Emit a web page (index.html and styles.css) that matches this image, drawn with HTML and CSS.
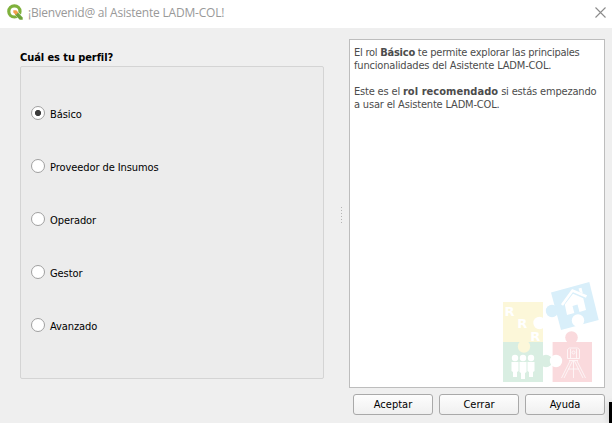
FILE: index.html
```html
<!DOCTYPE html>
<html lang="es">
<head>
<meta charset="utf-8">
<title>¡Bienvenid@ al Asistente LADM-COL!</title>
<link rel="stylesheet" href="styles.css">
</head>
<body>
<div class="dialog">
  <header class="titlebar">
    <svg class="logo" width="16" height="16" viewBox="0 0 16 16">
      <circle cx="7.400" cy="7.400" r="5.600" fill="none" stroke="#7fb13c" stroke-width="3.200"/>
      <path d="M9 9L14.500 14.500" stroke="#fff" stroke-width="4.500"/>
      <path d="M8 8h2.500l5.200 5.500v2.200h-3L8 10.700z" fill="#6ea23a"/>
      <path d="M6.300 6.300h3l2 2.200-2.400 2.400-2.600-2.400z" fill="#f0a04b"/>
    </svg>
    <span class="title">¡Bienvenid@ al Asistente LADM-COL!</span>
    <svg class="close" width="11" height="11" viewBox="0 0 11 11"><path d="M.5.5l10 10M10.500.5l-10 10" stroke="#8b8b8b" stroke-width="1.100"/></svg>
  </header>
  <main class="content">
    <section class="profile">
      <h1 class="heading">Cuál es tu perfil?</h1>
      <div class="group">
        <div class="option"><span class="radio checked"></span><span class="label">Básico</span></div>
        <div class="option"><span class="radio"></span><span class="label">Proveedor de Insumos</span></div>
        <div class="option"><span class="radio"></span><span class="label">Operador</span></div>
        <div class="option"><span class="radio"></span><span class="label">Gestor</span></div>
        <div class="option"><span class="radio"></span><span class="label">Avanzado</span></div>
      </div>
    </section>
    <div class="splitter"><i></i><i></i><i></i><i></i><i></i><i></i></div>
    <section class="side">
      <div class="info">
        <p><span class="tight">El rol <b>Básico</b> te permite explorar las principales</span><br>funcionalidades del Asistente LADM-COL.</p>
        <p>Este es el <b class="wide">rol recomendado</b> si estás empezando<br>a usar el Asistente LADM-COL.</p>
        <svg class="puzzle" width="98" height="102" viewBox="0 0 98 102">
          <rect x="1" y="21" width="40" height="40" fill="#fcf7d9"/>
          <rect x="1" y="61" width="40" height="40" fill="#d9eee2"/>
          <circle cx="22" cy="65.500" r="6.200" fill="#fcf7d9"/>
          <circle cx="37.500" cy="42" r="6.200" fill="#fff"/>
          <circle cx="44" cy="80" r="6.200" fill="#d9eee2"/>
          <rect x="50.600" y="61" width="39.400" height="40" fill="#fadadd"/>
          <circle cx="69.500" cy="56.500" r="6.300" fill="#fadadd"/>
          <circle cx="54" cy="80" r="6.200" fill="#fff"/>
          <path d="M49 11.500L87.300 1 96.700 39 59 49z" fill="#d9effa"/>
          <circle cx="50" cy="30" r="6.200" fill="#d9effa"/>
          <circle cx="76" cy="39.500" r="6.200" fill="#fff"/>
          <g class="rights"><text x="2.500" y="34.700">R</text><text x="15.300" y="47">R</text><text x="28.300" y="59.500">R</text></g>
          <path d="M60 24L70.500 9.500 84.500 15.500" fill="none" stroke="#fff" stroke-width="2.600"/>
          <path d="M76.500 7.500l3-.8 1.300 5.500-3-1z" fill="#fff"/>
          <path d="M62.800 23.500L71 12.800 81.300 17.200 84 29 77.500 31 75.500 23.500 70.500 25 72.300 32 65 34z" fill="#fff"/>
          <g fill="#fff">
            <circle cx="13" cy="77" r="3.200"/><circle cx="21" cy="77" r="3.200"/><circle cx="29" cy="77" r="3.200"/>
            <path d="M9.500 81h7v9l-1.500 1v5h-4v-5l-1.500-1zM25.500 81h7v9l-1.500 1v5h-4v-5l-1.500-1z"/>
            <path d="M17.500 81h7v10l-1.500 1v6h-4v-6l-1.500-1z"/>
          </g>
          <g fill="none" stroke="#fff" stroke-width=".9" opacity=".8">
            <path d="M65.500 68.500l2-1.500h8l2 1.500v9h-12zM68.500 68v9M74.500 68v9M67 79.500h9M71.500 80v17M68 80L59.500 97M70.500 80L62 97M75 80l8.500 17M72.500 80l8.500 17M66 88h11"/>
            <circle cx="71.500" cy="71.500" r="1.500"/>
          </g>
        </svg>
      </div>
      <div class="buttons">
        <button>Aceptar</button><button>Cerrar</button><button>Ayuda</button>
      </div>
    </section>
  </main>
  <div class="corner"></div>
</div>
</body>
</html>
```
FILE: styles.css
```css
* { box-sizing: border-box; }
body { margin: 0; }
.dialog {
  position: relative;
  display: flex;
  flex-direction: column;
  width: 612px;
  height: 423px;
  overflow: hidden;
  background: #efefef;
  color: #000;
  font: 11px/13px "DejaVu Sans Condensed", "DejaVu Sans", sans-serif;
  font-stretch: condensed;
}
.titlebar {
  display: flex;
  align-items: center;
  height: 28px;
  padding: 0 6px 4px 7px;
  background: #fff;
}
.title {
  flex: 1;
  margin: 2px 0 0 5px;
  color: #999;
  font: 12px/16px "Open Sans", sans-serif;
  letter-spacing: -.21px;
  white-space: nowrap;
}
.content { display: flex; flex: 1; }
.profile { width: 304px; margin-left: 20px; padding-top: 23px; }
.heading { margin: 0 0 2px; font-size: 11px; line-height: 13px; font-weight: bold; letter-spacing: -.08px; }
.group {
  display: flex;
  flex-direction: column;
  gap: 38px;
  height: 313px;
  padding: 38px 10px 0;
  border: 1px solid #d4d4d4;
  border-radius: 2px;
  background: #ececec;
}
.option { display: flex; align-items: center; height: 15px; }
.radio {
  width: 14px;
  height: 14px;
  border: 1px solid #a0a0a0;
  border-radius: 50%;
  background: #fff;
}
.checked { background: radial-gradient(circle, #3c3c3c 2.7px, #fff 3.5px); }
.label { margin: 3px 0 0 5px; letter-spacing: -.08px; white-space: nowrap; }
.splitter {
  display: flex;
  flex-direction: column;
  gap: 2px;
  width: 25px;
  padding: 179px 0 0 17px;
}
.splitter i { width: 1px; height: 1px; background: #b4b4b4; }
.side { width: 256px; padding-top: 11px; }
.info {
  position: relative;
  height: 349px;
  padding: 6px 4px;
  border: 1px solid #bdbdbd;
  background: #fff;
  color: #4c4c4c;
  letter-spacing: -.18px;
  white-space: nowrap;
}
.info p { margin: 0 0 13px; }
.tight { letter-spacing: -.24px; }
.wide { letter-spacing: .05px; }
.puzzle { position: absolute; left: 152px; top: 241px; }
.rights { fill: #fff; font: bold 13px "DejaVu Sans", sans-serif; letter-spacing: 0; }
.buttons { display: flex; gap: 6px; padding: 6px 0 0 4px; }
button {
  width: 80px;
  height: 21px;
  padding: 0;
  border: 1px solid #a9a9a9;
  border-radius: 3px;
  background: linear-gradient(#fdfdfd, #f0f0f0);
  color: #000;
  font: inherit;
}
.corner {
  position: absolute;
  left: 609px;
  top: 402px;
  width: 3px;
  height: 21px;
  background: #000;
  box-shadow: 0 0 7px rgba(0, 0, 0, .22);
}
```
